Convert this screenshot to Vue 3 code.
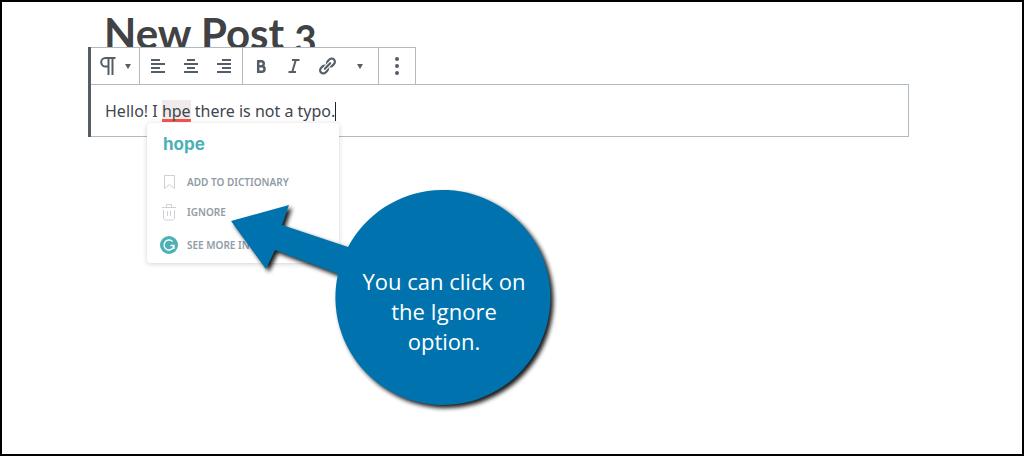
<script setup>
import { ref } from 'vue'

const alignments = [
  { name: 'Align left', d: 'M1 2h9M1 6h14M1 10h9M1 14h14' },
  { name: 'Align center', d: 'M4 2h8M1 6h14M4 10h8M1 14h14' },
  { name: 'Align right', d: 'M6 2h9M1 6h14M6 10h9M1 14h14' }
]
const suggestion = ref('hope')
</script>

<template>
  <main class="page">
    <section class="editor">
      <h1 class="title">New Post 3</h1>
      <div class="block">
        <div class="toolbar" role="toolbar" aria-label="Block tools">
          <div class="group type">
            <button type="button" aria-label="Change block type">
              <svg class="pilcrow" viewBox="0 0 16 18" width="16" height="18">
                <path d="M15.500 1H5.500a4.300 4.300 0 0 0 0 8.600h2.500M8.500 1v17M12.500 1v17" />
              </svg>
              <svg class="caret" viewBox="0 0 6 5" width="6" height="5"><path d="M0 0h6L3 5z" /></svg>
            </button>
          </div>
          <div class="group align">
            <button v-for="a in alignments" :key="a.name" type="button" :aria-label="a.name">
              <svg viewBox="0 0 16 16" width="16" height="16"><path :d="a.d" /></svg>
            </button>
          </div>
          <div class="group format">
            <button type="button" aria-label="Bold">
              <svg class="bold" viewBox="0 0 10 13" width="10" height="13">
                <path d="M1 1.300h4.300a2.400 2.400 0 0 1 0 4.900H2.500M2.500 6.200h3.300a2.700 2.700 0 0 1 0 5.500H1M2.200 1v11" />
              </svg>
            </button>
            <button type="button" aria-label="Italic">
              <svg viewBox="0 0 12 14" width="12" height="14">
                <path d="M4 1h7.500M.5 13H8M7.800 1 4.200 13" />
              </svg>
            </button>
            <button type="button" aria-label="Link">
              <svg class="link" viewBox="0 0 20 20" width="20" height="20">
                <path d="M17.740 2.760a4.321 4.321 0 0 1 0 6.100l-1.530 1.520c-1.120 1.120-2.700 1.470-4.140 1.090l2.620-2.610.760-.770.760-.760c.84-.84.84-2.200 0-3.040a2.130 2.130 0 0 0-3.040 0l-.770.760-3.380 3.380c-.37-1.440-.02-3.020 1.100-4.140l1.520-1.530a4.321 4.321 0 0 1 6.100 0zM8.590 13.430l5.340-5.340c.42-.42.42-1.100 0-1.520-.44-.43-1.130-.39-1.530 0l-5.330 5.340c-.42.42-.42 1.100 0 1.520.44.43 1.130.39 1.520 0zm-.76 2.290 4.140-4.150c.38 1.440.03 3.020-1.090 4.140l-1.520 1.530a4.321 4.321 0 0 1-6.100 0 4.321 4.321 0 0 1 0-6.100l1.530-1.520c1.120-1.120 2.700-1.470 4.140-1.100l-4.140 4.150c-.85.84-.85 2.200 0 3.050.84.840 2.200.840 3.040 0z" />
              </svg>
            </button>
            <button type="button" aria-label="More rich text controls">
              <svg class="caret" viewBox="0 0 6 5" width="6" height="5"><path d="M0 0h6L3 5z" /></svg>
            </button>
          </div>
          <div class="group more">
            <button type="button" aria-label="More options">
              <svg class="dots" viewBox="0 0 4 18" width="4" height="18">
                <circle cx="2" cy="2" r="2" /><circle cx="2" cy="9" r="2" /><circle cx="2" cy="16" r="2" />
              </svg>
            </button>
          </div>
        </div>

        <div class="paragraph">
          <p>Hello! I <span class="typo">hpe</span> there is not a typo.<span class="cursor"></span></p>
          <div class="popover">
            <button type="button" class="suggestion">{{ suggestion }}</button>
            <button type="button" class="action">
              <svg class="outline" viewBox="0 0 18 18" width="18" height="18">
                <path d="M4.500 2.500h10v13l-5-4-5 4z" />
              </svg>
              ADD TO DICTIONARY
            </button>
            <button type="button" class="action">
              <svg class="outline" viewBox="0 0 18 18" width="18" height="18">
                <path d="M2 4.500h14M6.500 4V1.500h5V4M3.500 7v8.500l1.500 1.500h8l1.500-1.500V7M7.500 8v5M10.500 8v5" />
              </svg>
              IGNORE
            </button>
            <button type="button" class="action service">
              <svg viewBox="0 0 18 18" width="18" height="18">
                <circle cx="9" cy="9" r="9" fill="#4bb1b5" />
                <path d="M12.600 5.500A5 5 0 1 0 14 9.500h-3.500M14 9.500V13" fill="none" stroke="#fff" stroke-width="1.400" />
              </svg>
              SEE MORE IN GRAMMARLY
            </button>
          </div>
        </div>
      </div>
    </section>

    <aside class="callout">
      <svg class="bubble" viewBox="0 0 330 226" width="330" height="226" aria-hidden="true">
        <path d="M1 35 59 19 52 39 118 61A107.500 107.500 0 1 1 108 88L45 64 36 83Z" />
      </svg>
      <p>You can click on the Ignore option.</p>
    </aside>
  </main>
</template>

<style>
body {
  margin: 0;
}
</style>

<style scoped>
.page {
  position: relative;
  box-sizing: border-box;
  min-height: 100vh;
  border: 2px solid #000;
  background: #fff;
  color: #40464d;
  font-family: "Noto Sans", "Open Sans", sans-serif;
}
button {
  display: flex;
  align-items: center;
  margin: 0;
  padding: 0;
  border: 0;
  background: none;
  color: inherit;
  font: inherit;
  cursor: pointer;
}
.editor {
  margin: 0 113px 0 86px;
  padding-top: 8px;
}
.title {
  height: 37px;
  margin: 0 0 0 16px;
  color: #404244;
  font: 700 42px/46px Lato, sans-serif;
  font-variant-numeric: oldstyle-nums;
}
.block {
  position: relative;
  border-left: 3px solid #555d66;
}
.toolbar {
  display: flex;
  width: max-content;
  border: 1px solid #b0bac2;
  border-left: 0;
  border-bottom: 0;
  background: #fff;
  color: #555d66;
}
.group {
  display: flex;
  height: 36px;
}
.group + .group {
  border-left: 1px solid #b0bac2;
}
.group button {
  justify-content: center;
  width: 33px;
}
.align,
.format {
  padding: 0 2px 0 1px;
}
.type button {
  gap: 9px;
  width: 48px;
}
.more button {
  width: 36px;
}
.toolbar svg {
  fill: none;
  stroke: currentColor;
  stroke-width: 2;
}
.toolbar .caret,
.toolbar .dots,
.toolbar .link {
  fill: currentColor;
  stroke: none;
}
.toolbar .bold {
  stroke-width: 2.5;
}
.paragraph {
  position: relative;
  border: 1px solid #b0bac2;
  border-left: 0;
}
.paragraph p {
  margin: 0;
  padding: 14px 14px 12px;
  font-size: 16px;
  line-height: 25px;
}
.typo {
  background: linear-gradient(#f4544f, #f4544f) bottom / 100% 3px no-repeat #f1eaea;
}
.cursor {
  display: inline-block;
  height: 19px;
  border-left: 1px solid #222;
  vertical-align: -4px;
}
.popover {
  position: absolute;
  top: 38px;
  left: 56px;
  box-sizing: border-box;
  width: 192px;
  padding: 7px 12px 3px 13px;
  border-radius: 4px;
  background: #fff;
  box-shadow: 0 1px 5px rgba(60, 50, 60, 0.22);
}
.suggestion {
  height: 28px;
  margin: 0 0 9px 3px;
  color: #4bb1b5;
  font-family: Inter, sans-serif;
  font-size: 17px;
  font-weight: 700;
}
.action {
  gap: 9px;
  height: 30px;
  color: #919ba4;
  font-size: 10px;
  font-weight: 600;
  white-space: nowrap;
}
.service {
  margin-top: 3px;
}
.outline {
  fill: none;
  stroke: #cdd2d8;
  stroke-width: 1;
}
.callout {
  position: absolute;
  top: 184px;
  left: 228px;
  width: 330px;
}
.bubble {
  display: block;
  overflow: visible;
  fill: #0073ae;
  filter: drop-shadow(3px 3px 2px rgba(0, 0, 0, 0.9));
}
.callout p {
  position: absolute;
  top: 80px;
  left: 129px;
  width: 170px;
  margin: 0;
  color: #fff;
  font: 22px/30px "Open Sans", sans-serif;
  text-align: center;
}
</style>
